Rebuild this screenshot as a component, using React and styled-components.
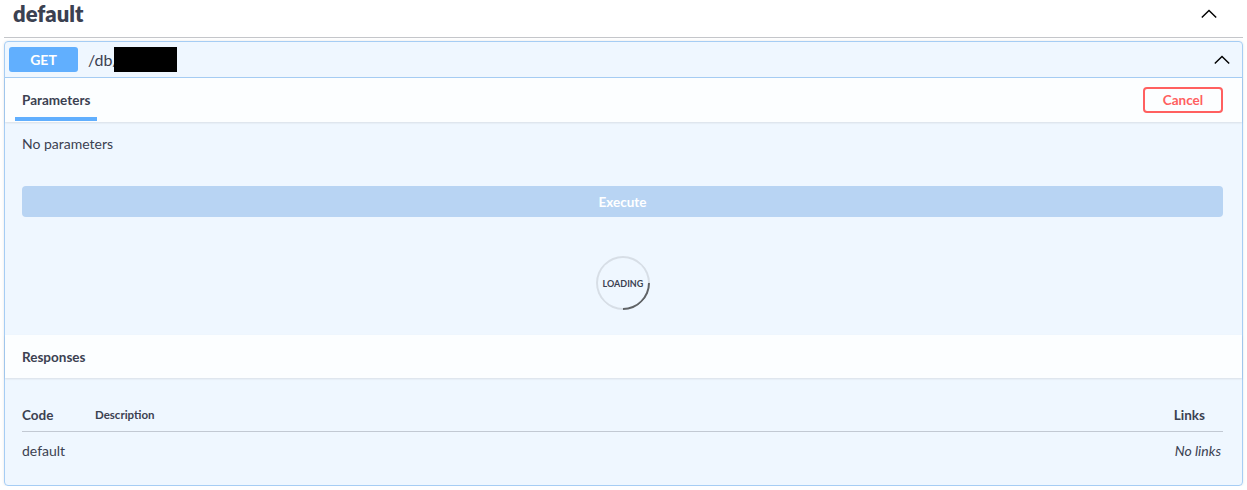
import React from "react";
import styled, { createGlobalStyle } from "styled-components";

const Global = createGlobalStyle`
  html, body { margin: 0; padding: 0; background: #fff; }
  body { font-family: Lato, "Open Sans", sans-serif; color: #3b4151; }
  * { box-sizing: border-box; }
`;

const Page = styled.div`
  padding: 0 4px 0 4px;
  width: 1247px;
`;

const TagHeader = styled.div`
  display: flex;
  align-items: center;
  justify-content: space-between;
  height: 38px;
  padding: 0 25px 9px 9px;
  border-bottom: 1px solid rgba(59, 65, 81, 0.3);
  margin-bottom: 3px;
`;

const TagTitle = styled.h3`
  margin: 0;
  font-size: 22px;
  font-weight: 800;
  line-height: 28px;
  color: #3b4151;
`;

const Chevron = ({ size = 18 }) => (
  <svg width={size} height={size} viewBox="0 0 20 20" fill="none">
    <path d="M2 14 L10 6 L18 14" stroke="#000" strokeWidth="1.6" />
  </svg>
);

const Opblock = styled.div`
  border: 1px solid #a6cdf4;
  border-radius: 4px;
  background: rgba(97, 175, 254, 0.1);
  box-shadow: 0 0 3px rgba(0, 0, 0, 0.1);
  width: 1239px;
`;

const Summary = styled.div`
  display: flex;
  align-items: center;
  height: 36px;
  padding: 0 11px 0 4px;
  border-bottom: 1px solid #a6cdf4;
`;

const Method = styled.span`
  display: inline-flex;
  align-items: center;
  justify-content: center;
  width: 69px;
  height: 25px;
  border-radius: 3px;
  background: #61affe;
  color: #fff;
  font-size: 14px;
  font-weight: 700;
`;

const Path = styled.span`
  display: inline-flex;
  align-items: center;
  margin-left: 10px;
  font-size: 16px;
  color: #3b4151;
  flex: 1;
`;

const Redact = styled.span`
  display: inline-block;
  width: 63px;
  height: 25px;
  margin-left: -6px;
  background: #000;
`;

const SectionHeader = styled.div`
  display: flex;
  align-items: center;
  justify-content: space-between;
  height: ${(p) => p.h}px;
  padding: 0 19px 0 ${(p) => p.pl}px;
  background: rgba(255, 255, 255, 0.8);
  box-shadow: 0 1px 2px rgba(0, 0, 0, 0.1);
`;

const Tab = styled.div`
  align-self: stretch;
  display: flex;
  align-items: center;
  position: relative;
  padding: 0 7px;
  font-size: 13.5px;
  font-weight: 700;
  &::after {
    content: "";
    position: absolute;
    left: 0;
    right: 0;
    bottom: 1px;
    height: 4px;
    background: #61affe;
  }
`;

const SectionTitle = styled.h4`
  margin: 0;
  font-size: 13.5px;
  font-weight: 700;
`;

const CancelBtn = styled.button`
  width: 80px;
  height: 26px;
  border: 2px solid #ff6060;
  border-radius: 4px;
  background: transparent;
  color: #ff6060;
  font-family: inherit;
  font-size: 13.5px;
  font-weight: 700;
  padding: 0;
`;

const Body = styled.div`
  padding: 13px 19px 0 17px;
`;

const Plain = styled.div`
  font-size: 14px;
  line-height: 18px;
`;

const ExecuteBtn = styled.button`
  display: block;
  width: 100%;
  height: 31px;
  margin-top: 33px;
  border: none;
  border-radius: 4px;
  background: #b8d4f3;
  color: #fff;
  font-family: inherit;
  font-size: 13.5px;
  font-weight: 700;
`;

const LoadingWrap = styled.div`
  display: flex;
  justify-content: center;
  padding: 39px 0 25px;
`;

const Spinner = styled.div`
  width: 54px;
  height: 54px;
  border-radius: 50%;
  border: 2px solid rgba(0, 0, 0, 0.1);
  border-right-color: rgba(0, 0, 0, 0.6);
  border-bottom-color: rgba(0, 0, 0, 0.1);
  transform: rotate(45deg);
  display: flex;
  align-items: center;
  justify-content: center;
`;

const SpinnerText = styled.span`
  transform: rotate(-45deg);
  font-size: 9px;
  font-weight: 700;
  color: #3b4151;
`;

const RespBody = styled.div`
  padding: 20px 19px 0 17px;
  height: 107px;
`;

const HeadRow = styled.div`
  display: flex;
  align-items: center;
  height: 34px;
  border-bottom: 1px solid rgba(59, 65, 81, 0.25);
`;

const Th = styled.div`
  font-size: ${(p) => p.fs}px;
  font-weight: 700;
  width: ${(p) => (p.w ? p.w + "px" : "auto")};
  flex: ${(p) => (p.grow ? 1 : "none")};
  padding-right: ${(p) => p.pr || 0}px;
`;

const Row = styled.div`
  display: flex;
  align-items: center;
  height: 36px;
`;

const Td = styled.div`
  font-size: 14px;
  flex: ${(p) => (p.grow ? 1 : "none")};
  font-style: ${(p) => (p.italic ? "italic" : "normal")};
  padding-right: ${(p) => p.pr || 0}px;
`;

export default function App() {
  return (
    <>
      <Global />
      <Page>
        <TagHeader>
          <TagTitle>default</TagTitle>
          <Chevron />
        </TagHeader>
        <Opblock>
          <Summary>
            <Method>GET</Method>
            <Path>
              /db/<Redact />
            </Path>
            <Chevron />
          </Summary>
          <SectionHeader h={44} pl={10}>
            <Tab>Parameters</Tab>
            <CancelBtn>Cancel</CancelBtn>
          </SectionHeader>
          <Body>
            <Plain>No parameters</Plain>
            <ExecuteBtn>Execute</ExecuteBtn>
            <LoadingWrap>
              <Spinner>
                <SpinnerText>LOADING</SpinnerText>
              </Spinner>
            </LoadingWrap>
          </Body>
          <SectionHeader h={43} pl={17}>
            <SectionTitle>Responses</SectionTitle>
          </SectionHeader>
          <RespBody>
            <HeadRow>
              <Th fs={13.5} w={73}>Code</Th>
              <Th fs={11.5} grow>Description</Th>
              <Th fs={13.5} pr={18}>Links</Th>
            </HeadRow>
            <Row>
              <Td grow>default</Td>
              <Td italic pr={2}>No links</Td>
            </Row>
          </RespBody>
        </Opblock>
      </Page>
    </>
  );
}
